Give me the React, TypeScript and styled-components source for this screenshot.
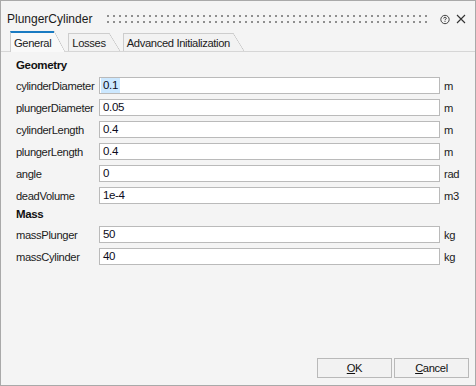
import React from 'react'
import styled, { createGlobalStyle } from 'styled-components'

const GlobalStyle = createGlobalStyle`
  html, body {
    margin: 0;
    padding: 0;
    background: #f4f4f4;
  }
  * {
    box-sizing: border-box;
  }
`

const Window = styled.div`
  width: 476px;
  height: 386px;
  display: flex;
  flex-direction: column;
  border: 1px solid #a9a9a9;
  background: #f4f4f4;
  color: #1b1b1b;
  font-family: 'Liberation Sans', Arial, sans-serif;
  font-size: 11.2px;
  letter-spacing: -0.35px;
`

const TitleBar = styled.div`
  height: 30px;
  display: flex;
  align-items: center;
  padding: 5px 9px 0 6px;
`

const Title = styled.div`
  font-size: 12px;
  letter-spacing: 0;
  color: #1a1a1a;
`

const Grip = styled.div`
  flex: 1;
  height: 8px;
  margin: 1px 12px 0 15px;
  background-image: radial-gradient(circle at 1px 1px, #8f8f8f 1.1px, transparent 1.3px);
  background-size: 6px 6px;
`

const IconButton = styled.div<{ gap?: number }>`
  width: 10px;
  height: 10px;
  display: flex;
  align-items: center;
  justify-content: center;
  margin-left: ${(p) => p.gap ?? 0}px;
  margin-top: 1px;
`

const TabBar = styled.div`
  height: 21px;
  display: flex;
  align-items: flex-end;
  padding-left: 9px;
  border-bottom: 1px solid #d6d6d6;
`

const Tab = styled.div<{ active?: boolean }>`
  position: relative;
  display: flex;
  align-items: center;
  height: ${(p) => (p.active ? 21 : 18)}px;
  margin-bottom: ${(p) => (p.active ? -1 : 0)}px;
  margin-right: 14px;
  padding: 0 3px;
  border-left: 1px solid #cdcdcd;
  border-top: ${(p) => (p.active ? '2px solid #1a7bc2' : '1px solid #cdcdcd')};
  background: ${(p) => (p.active ? '#f9f9f9' : '#f2f2f2')};
  white-space: nowrap;

  &::after {
    content: '';
    position: absolute;
    left: 100%;
    top: ${(p) => (p.active ? -2 : -1)}px;
    bottom: 0;
    width: 11px;
    background: linear-gradient(
      to top right,
      ${(p) => (p.active ? '#f9f9f9' : '#f2f2f2')} calc(50% - 0.6px),
      #c4c4c4 50%,
      transparent calc(50% + 0.6px)
    );
  }
`

const Form = styled.div`
  padding: 3px 9px 0 15px;
`

const SectionHeader = styled.div`
  height: 15px;
  line-height: 15px;
  margin: 3px 0 4px;
  font-weight: bold;
  font-size: 11.5px;
  color: #111;
`

const Grid = styled.div`
  display: grid;
  grid-template-columns: 79px 341px auto;
  column-gap: 4px;
  row-gap: 5px;
  align-items: center;
`

const Label = styled.div`
  white-space: nowrap;
`

const Field = styled.div`
  height: 17px;
  display: flex;
  align-items: center;
  padding-left: 1px;
  border: 1px solid #bababa;
  background: #ffffff;
  color: #0b0b20;
  font-size: 11.5px;
`

const Value = styled.span<{ selected?: boolean }>`
  padding: 1px 2px;
  line-height: 13px;
  background: ${(p) => (p.selected ? '#cce8ff' : 'transparent')};
`

const Unit = styled.div`
  white-space: nowrap;
`

const Footer = styled.div`
  margin-top: auto;
  display: flex;
  justify-content: flex-end;
  gap: 2px;
  padding: 0 6px 7px 0;
`

const Button = styled.div`
  width: 75px;
  height: 20px;
  display: flex;
  align-items: center;
  justify-content: center;
  border: 1px solid #b9b9b9;
  background: #f2f2f2;
  color: #111;

  u {
    text-decoration: underline;
    text-underline-offset: 1px;
  }
`

type Param = { name: string; value: string; unit: string; selected?: boolean }

const geometry: Param[] = [
  { name: 'cylinderDiameter', value: '0.1', unit: 'm', selected: true },
  { name: 'plungerDiameter', value: '0.05', unit: 'm' },
  { name: 'cylinderLength', value: '0.4', unit: 'm' },
  { name: 'plungerLength', value: '0.4', unit: 'm' },
  { name: 'angle', value: '0', unit: 'rad' },
  { name: 'deadVolume', value: '1e-4', unit: 'm3' },
]

const mass: Param[] = [
  { name: 'massPlunger', value: '50', unit: 'kg' },
  { name: 'massCylinder', value: '40', unit: 'kg' },
]

const HelpIcon = () => (
  <svg width="11" height="11" viewBox="0 0 11 11">
    <circle cx="5.5" cy="5.5" r="4.6" fill="none" stroke="#333" strokeWidth="1" />
    <path
      d="M4 4.4 C4 3.4 4.7 3 5.5 3 C6.3 3 7 3.5 7 4.2 C7 5 6 5.1 5.6 5.7 L5.5 6.4"
      fill="none"
      stroke="#333"
      strokeWidth="1"
    />
    <rect x="5" y="7.2" width="1" height="1" fill="#333" />
  </svg>
)

const CloseIcon = () => (
  <svg width="10" height="10" viewBox="0 0 10 10">
    <path d="M1 1 L9 9 M9 1 L1 9" stroke="#333" strokeWidth="1.1" />
  </svg>
)

const Rows: React.FC<{ items: Param[] }> = ({ items }) => (
  <Grid>
    {items.map((p) => (
      <React.Fragment key={p.name}>
        <Label>{p.name}</Label>
        <Field>
          <Value selected={p.selected}>{p.value}</Value>
        </Field>
        <Unit>{p.unit}</Unit>
      </React.Fragment>
    ))}
  </Grid>
)

const App: React.FC = () => (
  <>
    <GlobalStyle />
    <Window>
      <TitleBar>
        <Title>PlungerCylinder</Title>
        <Grip />
        <IconButton>
          <HelpIcon />
        </IconButton>
        <IconButton gap={6}>
          <CloseIcon />
        </IconButton>
      </TitleBar>
      <TabBar>
        <Tab active>General</Tab>
        <Tab>Losses</Tab>
        <Tab>Advanced Initialization</Tab>
      </TabBar>
      <Form>
        <SectionHeader>Geometry</SectionHeader>
        <Rows items={geometry} />
        <SectionHeader>Mass</SectionHeader>
        <Rows items={mass} />
      </Form>
      <Footer>
        <Button>
          <u>O</u>K
        </Button>
        <Button>
          <u>C</u>ancel
        </Button>
      </Footer>
    </Window>
  </>
)

export default App
